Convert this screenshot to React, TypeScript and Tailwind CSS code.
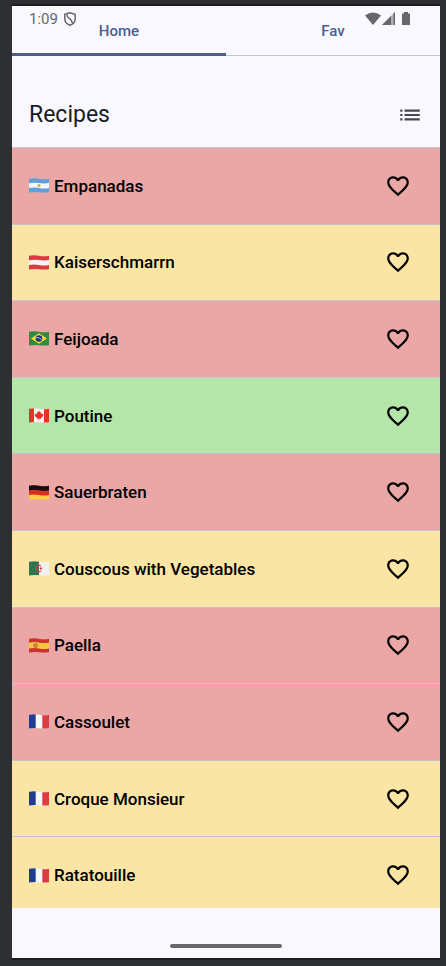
import { useState } from "react";
import type { ReactNode } from "react";

type Level = "hard" | "medium" | "easy";

const levelColor: Record<Level, string> = {
  hard: "bg-[#eaa7a6]",
  medium: "bg-[#fbe5a5]",
  easy: "bg-[#b4e5a9]",
};

const flags: Record<string, ReactNode> = {
  ar: (
    <>
      <path fill="#5f9fdb" d="M0 0h20v15H0z" />
      <path fill="#f4f6f8" d="M0 5.200Q5 4.200 10 5t10 0v5q-5 1-10 0T0 10z" />
      <circle cx="10" cy="7.5" r="1.6" fill="#e3a53c" />
    </>
  ),
  at: (
    <>
      <path fill="#dc3a3f" d="M0 0h20v15H0z" />
      <path fill="#f7f3f3" d="M0 5.200Q5 4.200 10 5t10 0v5q-5 1-10 0T0 10z" />
    </>
  ),
  br: (
    <>
      <path fill="#318a3e" d="M0 0h20v15H0z" />
      <path fill="#f6dc35" d="M2 7.500 10 2.300 18 7.500 10 12.700z" />
      <circle cx="10" cy="7.5" r="3.3" fill="#1c3474" />
      <path d="M7 6.500q3-.5 6 2.200" stroke="#c9d4e8" strokeWidth=".8" fill="none" />
    </>
  ),
  ca: (
    <>
      <path fill="#f6f4f4" d="M0 0h20v15H0z" />
      <path fill="#e33426" d="M0 0h5v15H0zM15 0h5v15h-5z" />
      <path
        fill="#e33426"
        d="m10 2.500 1 1.800 1-.4-.3 2.300 1.200-1 .3.800 1.300-.2-.6 1.500.6.500-2.600 2.100.2 1-1.800-.3v1.900h-.6v-1.900l-1.800.3.200-1-2.600-2.100.6-.5-.6-1.500 1.300.2.300-.8 1.200 1L8 3.900l1 .4z"
      />
    </>
  ),
  de: (
    <>
      <path fill="#f8cf3d" d="M0 0h20v15H0z" />
      <path fill="#d92e20" d="M0 0h20v10q-5 1-10 0T0 10z" />
      <path fill="#111111" d="M0 0h20v5.200q-5 1-10 0t-10 .2z" />
    </>
  ),
  dz: (
    <>
      <path fill="#f1f2f0" d="M0 0h20v15H0z" />
      <path fill="#2f7650" d="M0 0h10v15H0z" />
      <path d="M12 5.200a3 3 0 1 0 0 4.600" stroke="#d63b50" strokeWidth="1.100" fill="none" />
      <path fill="#d63b50" d="m10 7.500 1.300-.4.200-1.300.8 1 1.200-.4-.7 1.100.7 1.100-1.200-.4-.8 1-.2-1.300z" />
    </>
  ),
  es: (
    <>
      <path fill="#cb3430" d="M0 0h20v15H0z" />
      <path fill="#f5c63d" d="M0 4.500Q5 3.500 10 4.500t10 0v6q-5 1-10 0t-10 0z" />
      <path fill="#b9703b" d="M4.500 5.500h4v3.500l-2 1.300-2-1.300z" />
      <path fill="#e9a954" d="M6 6.700h1v2H6z" />
    </>
  ),
  fr: (
    <>
      <path fill="#f7f7fa" d="M0 0h20v15H0z" />
      <path fill="#203d94" d="M0 0h6.700v15H0z" />
      <path fill="#dc3d42" d="M13.300 0H20v15h-6.700z" />
    </>
  ),
};

const recipes: { name: string; flag: string; level: Level }[] = [
  { name: "Empanadas", flag: "ar", level: "hard" },
  { name: "Kaiserschmarrn", flag: "at", level: "medium" },
  { name: "Feijoada", flag: "br", level: "hard" },
  { name: "Poutine", flag: "ca", level: "easy" },
  { name: "Sauerbraten", flag: "de", level: "hard" },
  { name: "Couscous with Vegetables", flag: "dz", level: "medium" },
  { name: "Paella", flag: "es", level: "hard" },
  { name: "Cassoulet", flag: "fr", level: "hard" },
  { name: "Croque Monsieur", flag: "fr", level: "medium" },
  { name: "Ratatouille", flag: "fr", level: "medium" },
];

function Flag({ code }: { code: string }) {
  return (
    <svg viewBox="0 0 20 15" className="h-[15px] w-5 shrink-0" aria-hidden="true">
      <g clipPath="url(#flag-wave)">{flags[code]}</g>
    </svg>
  );
}

function StatusBar() {
  return (
    <div className="pointer-events-none absolute inset-x-0 top-0 flex h-[25px] items-center justify-between pr-[29px] pl-[17px] text-[#67666b]">
      <div className="flex items-center gap-1.5">
        <span className="text-[15px] leading-6">1:09</span>
        <svg viewBox="0 0 12 14" className="h-3.5 w-3" fill="none" stroke="currentColor" strokeWidth="1.500" aria-hidden="true">
          <path d="M6 .8.800 2.300v4.500C.8 9.800 3 12.300 6 13.200c3-.9 5.200-3.400 5.200-6.400V2.300z" />
          <path d="M3 2.500C3 6 5 6 6.500 7.500S7.500 10 8.800 11" />
        </svg>
      </div>
      <svg viewBox="0 0 46 14" className="h-3.5 w-[46px]" fill="currentColor" aria-hidden="true">
        <path d="M0 3.500Q8-2.500 16 3.500L8 13z" />
        <path d="M30 0v13H17z" opacity=".5" />
        <path d="M26 4v9h-9zM28.500 1.500 30 0v13h-1.500z" />
        <path d="M39 1.500V0h4v1.500h2V13h-8V1.500z" />
      </svg>
    </div>
  );
}

export default function App() {
  const [tab, setTab] = useState("Home");
  const [favorites, setFavorites] = useState<string[]>([]);

  const toggle = (name: string) =>
    setFavorites((f) => (f.includes(name) ? f.filter((n) => n !== name) : [...f, name]));

  return (
    <div className="flex min-h-screen flex-col bg-[#2d2f33] font-[Roboto,sans-serif]">
      <svg className="absolute size-0" aria-hidden="true">
        <clipPath id="flag-wave">
          <path d="M0 .8Q5-.2 10 .8t10 0v13.400q-5 .8-10 0t-10 .4z" />
        </clipPath>
      </svg>
      <div className="mt-1 mr-1.5 mb-1.5 ml-3 flex flex-1 flex-col border-y-2 border-[#1d1c21] bg-[#faf8ff]">
        <header className="relative">
          <nav className="flex h-[50px]" role="tablist">
            {["Home", "Fav"].map((name) => (
              <button
                key={name}
                type="button"
                role="tab"
                aria-selected={tab === name}
                onClick={() => setTab(name)}
                className={`flex flex-1 items-end justify-center text-[15px] leading-5 font-medium text-[#4c5d92] ${
                  tab === name ? "border-b-3 border-[#4c5d92] pb-3" : "border-b border-[#c6c6d0] pb-3.5"
                }`}
              >
                {name}
              </button>
            ))}
          </nav>
          <StatusBar />
        </header>

        <main className="flex flex-1 flex-col">
          <div className="mt-[26px] flex h-[65px] items-center justify-between pr-[17px] pl-[17px]">
            <h1 className="text-[23px] leading-8 text-[#1a1b21]">Recipes</h1>
            <button type="button" aria-label="Change view" className="text-[#45464f]">
              <svg viewBox="0 0 24 24" className="size-[26px]" fill="currentColor" aria-hidden="true">
                <path d="M3 13h2v-2H3v2zm0 4h2v-2H3v2zm0-8h2V7H3v2zm4 4h14v-2H7v2zm0 4h14v-2H7v2zM7 7v2h14V7H7z" />
              </svg>
            </button>
          </div>

          <div className="max-h-[761px] overflow-hidden">
            <ul className="grid h-[766px] auto-rows-fr">
              {recipes.map(({ name, flag, level }) => (
                <li
                  key={name}
                  className={`flex items-center justify-between border-t border-[#c6c6d0] pr-[29px] pl-[17px] ${levelColor[level]}`}
                >
                  <span className="flex items-center gap-[5px] text-[17px] leading-6 font-medium text-black">
                    <Flag code={flag} />
                    {name}
                  </span>
                  <button
                    type="button"
                    aria-label={`Favorite ${name}`}
                    aria-pressed={favorites.includes(name)}
                    onClick={() => toggle(name)}
                    className="text-black"
                  >
                    <svg viewBox="0 0 24 24" className="size-[26px]" fill="currentColor" aria-hidden="true">
                      <path d="M16.500 3c-1.740 0-3.410.810-4.500 2.090C10.910 3.810 9.240 3 7.500 3 4.420 3 2 5.420 2 8.500c0 3.780 3.400 6.860 8.550 11.540L12 21.350l1.450-1.320C18.600 15.360 22 12.280 22 8.500 22 5.420 19.580 3 16.500 3zm-4.400 15.550l-.1.1-.1-.1C7.140 14.240 4 11.390 4 8.500 4 6.500 5.500 5 7.500 5c1.540 0 3.040.990 3.570 2.360h1.870C13.460 5.990 14.960 5 16.500 5c2 0 3.500 1.500 3.500 3.500 0 2.890-3.140 5.740-7.900 10.050z" />
                    </svg>
                  </button>
                </li>
              ))}
            </ul>
          </div>

          <div className="flex flex-1 items-end justify-center pb-2.5">
            <div className="h-1 w-28 rounded-full bg-[#67666b]" />
          </div>
        </main>
      </div>
    </div>
  );
}
